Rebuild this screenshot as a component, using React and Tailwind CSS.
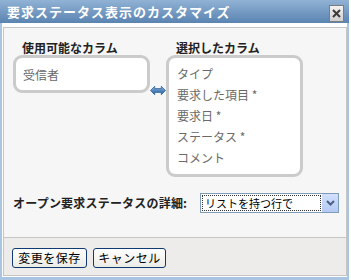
const jp = { fontFamily: '"Noto Sans CJK JP", "Noto Sans", sans-serif' };

function SwapArrow() {
  return (
    <svg width="17" height="11" viewBox="0 0 17 11">
      <defs>
        <linearGradient id="ag" x1="0" y1="0" x2="0" y2="1">
          <stop offset="0" stopColor="#8fb6e0" />
          <stop offset="1" stopColor="#1f5a9c" />
        </linearGradient>
      </defs>
      <polygon
        points="0.5,5.5 5,1 5,3.5 12,3.5 12,1 16.5,5.5 12,10 12,7.5 5,7.5 5,10"
        fill="url(#ag)"
        stroke="#2a5f98"
        strokeWidth="0.8"
        strokeLinejoin="round"
      />
    </svg>
  );
}

function Chevron() {
  return (
    <svg width="9" height="6" viewBox="0 0 9 6">
      <path d="M1 1 L4.5 4.5 L8 1" stroke="#4d6185" strokeWidth="2" fill="none" />
    </svg>
  );
}

export default function App() {
  const selected = ["タイプ", "要求した項目 *", "要求日 *", "ステータス *", "コメント"];

  return (
    <div className="w-[351px] h-[280px] bg-white overflow-hidden flex" style={jp}>
      <div className="w-[349px] h-[280px] flex flex-col">
        {/* title bar */}
        <div className="h-[23px] flex items-center justify-between pl-[7px] pr-[5px] bg-gradient-to-b from-[#91b2d5] to-[#5b84b1]">
          <span className="text-white font-bold text-[13px] tracking-[1px] leading-none">
            要求ステータス表示のカスタマイズ
          </span>
          <div className="w-[15px] h-[17px] mt-[3px] border border-[#7c7c7c] bg-gradient-to-b from-[#f2f2f2] to-[#cfcfcf] flex items-center justify-center">
            <svg width="9" height="9" viewBox="0 0 9 9">
              <path d="M1 1 L8 8 M8 1 L1 8" stroke="#3a3a3a" strokeWidth="2" />
            </svg>
          </div>
        </div>

        <div className="flex-1 flex flex-col bg-[#a9c5e2] px-[2px] pb-[3px]">
          <div className="flex-1 flex flex-col bg-white pt-[4px] pl-[1px] pb-[1px]">
            <div className="flex-1 flex flex-col border border-[#c6c6c6]">
              {/* content */}
              <div className="flex-1 bg-[#f6f6f6] pl-[9px] pt-[12px]">
                <div className="flex items-start">
                  <div className="flex flex-col">
                    <div className="pl-[9px] h-[15px] text-[12px] leading-[15px] font-bold text-[#222]">
                      使用可能なカラム
                    </div>
                    <div className="w-[137px] h-[38px] border-[3px] border-[#cbcbcb] rounded-[9px] bg-white pl-[7px] pt-[6px] text-[12px] leading-[21px] text-[#6a6a6a]">
                      受信者
                    </div>
                  </div>
                  <div className="w-[16px] mt-[45px] flex justify-center">
                    <SwapArrow />
                  </div>
                  <div className="flex flex-col">
                    <div className="pl-[10px] h-[15px] text-[12px] leading-[15px] font-bold text-[#222]">
                      選択したカラム
                    </div>
                    <div className="w-[137px] h-[122px] border-[3px] border-[#cbcbcb] rounded-[9px] bg-white pl-[8px] pt-[5px] text-[12px] leading-[21px] text-[#6a6a6a]">
                      {selected.map((s) => (
                        <div key={s}>{s}</div>
                      ))}
                    </div>
                  </div>
                </div>

                <div className="flex items-center mt-[16px]">
                  <span className="w-[187px] text-[12px] font-bold text-[#222] tracking-[0.2px]">
                    オープン要求ステータスの詳細:
                  </span>
                  <div className="w-[139px] h-[20px] border border-[#7f9db9] bg-white flex items-center">
                    <div className="flex-1 h-[16px] ml-[1px] border border-dotted border-[#333] flex items-center pl-[2px] text-[11px] text-black">
                      リストを持つ行で
                    </div>
                    <div className="w-[16px] h-[18px] ml-[1px] bg-gradient-to-b from-[#d3e0fb] to-[#b4c9f5] flex items-center justify-center">
                      <Chevron />
                    </div>
                  </div>
                </div>
              </div>

              {/* footer */}
              <div className="h-[38px] border-t border-[#c6c6c6] bg-[#edecea] flex items-start pt-[10px] pl-[8px] gap-[6px]">
                <button className="w-[75px] h-[20px] rounded-[3px] border border-[#0f3b72] bg-gradient-to-b from-white to-[#ecebe6] text-[12px] tracking-[0.5px] leading-none text-black">
                  変更を保存
                </button>
                <button className="w-[73px] h-[20px] rounded-[3px] border border-[#0f3b72] bg-gradient-to-b from-white to-[#ecebe6] text-[12px] tracking-[0.5px] leading-none text-black">
                  キャンセル
                </button>
              </div>
            </div>
          </div>
        </div>
      </div>
    </div>
  );
}
